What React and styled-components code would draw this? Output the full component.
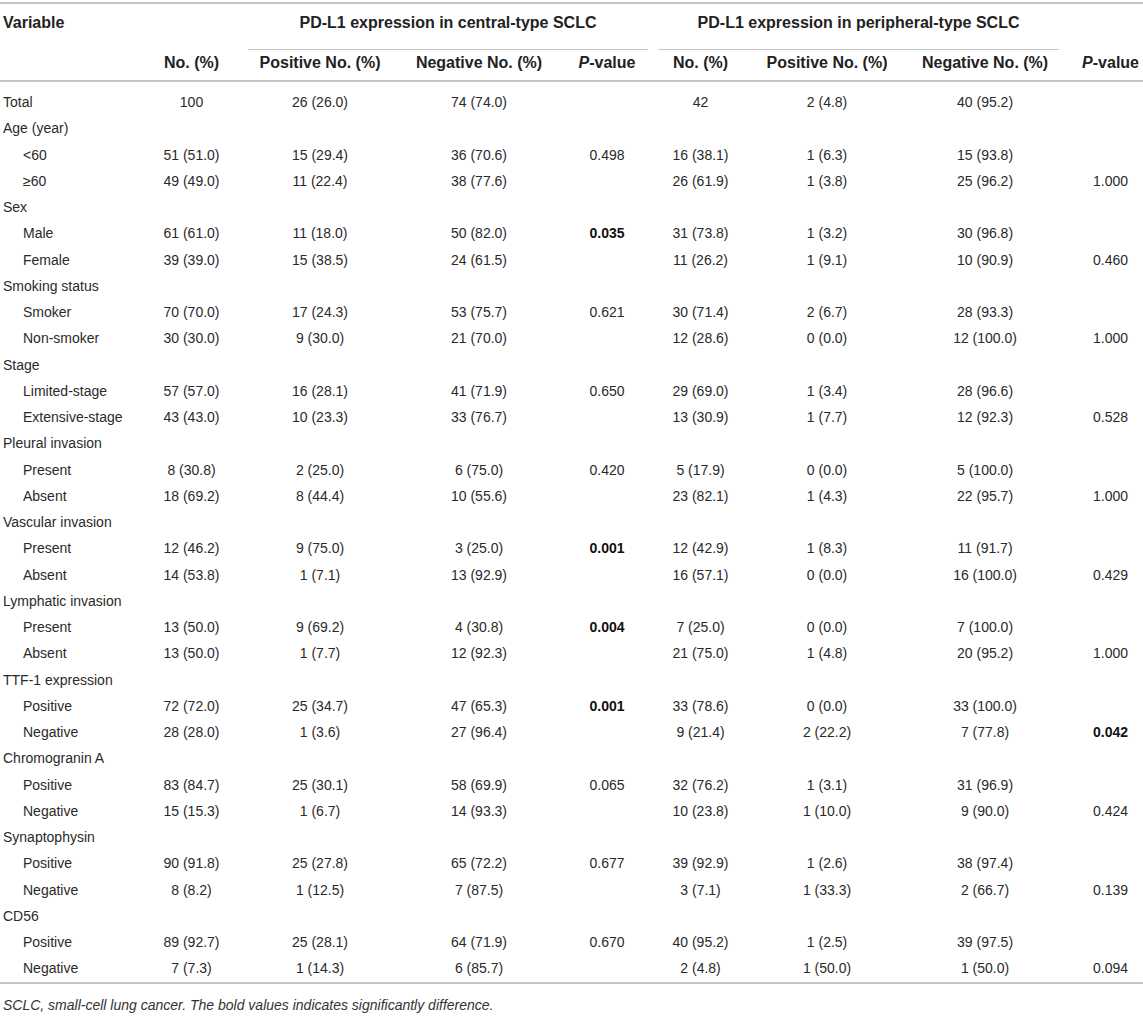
import React from "react";
import styled, { createGlobalStyle } from "styled-components";

const GlobalStyle = createGlobalStyle`
  html, body { margin: 0; padding: 0; background: #ffffff; }
  body { font-family: "Liberation Sans", Arial, Helvetica, sans-serif; color: #2a2a2a; }
`;

const Page = styled.div`
  width: 1143px;
  padding-top: 2px;
`;

const Table = styled.table`
  width: 1143px;
  table-layout: fixed;
  border-collapse: separate;
  border-spacing: 0;
`;

const HeadCell = styled.th`
  font-size: 16px;
  line-height: 18px;
  font-weight: 700;
  color: #222;
  text-align: ${(p) => (p.$left ? "left" : "center")};
  vertical-align: top;
  padding: ${(p) => (p.$top ? "10px 3px 0" : "4px 3px 8px")};
  ${(p) => p.$last && "padding-left: 14px; padding-right: 0;"}
  border-top: ${(p) => (p.$top ? "2px solid #c6c6c6" : "none")};
  border-bottom: ${(p) => (p.$top ? "none" : "2px solid #c6c6c6")};
  white-space: nowrap;
`;

const GroupCell = styled.th`
  font-size: 16px;
  line-height: 18px;
  font-weight: 700;
  color: #222;
  text-align: center;
  vertical-align: top;
  padding: 10px 5px 0;
  border-top: 2px solid #c6c6c6;
  white-space: nowrap;
`;

const GroupTitle = styled.div`
  padding-bottom: 17px;
  border-bottom: 1px solid #c6c6c6;
`;

const Cell = styled.td`
  font-size: 14px;
  line-height: 18.25px;
  padding: 4px 3px 4px ${(p) => (p.$indent ? "23px" : "3px")};
  ${(p) => p.$last && "padding-left: 14px; padding-right: 0;"}
  text-align: ${(p) => (p.$label ? "left" : "center")};
  font-weight: ${(p) => (p.$bold ? 700 : 400)};
  color: ${(p) => (p.$bold ? "#111" : "#2a2a2a")};
  white-space: nowrap;
  tbody tr:first-child & { padding-top: 11px; }
  tbody tr:last-child & { border-bottom: 2px solid #c6c6c6; }
`;

const Note = styled.p`
  margin: 13px 0 0 3px;
  font-size: 14px;
  line-height: 16px;
  font-style: italic;
  color: #333;
`;

const widths = [140, 103, 154, 164, 92, 95, 158, 158, 79];

const PValue = () => (
  <>
    <i>P</i>-value
  </>
);

const rows = [
  ["Total", false, ["100", "26 (26.0)", "74 (74.0)", "", "42", "2 (4.8)", "40 (95.2)", ""]],
  ["Age (year)", false, null],
  ["<60", true, ["51 (51.0)", "15 (29.4)", "36 (70.6)", "0.498", "16 (38.1)", "1 (6.3)", "15 (93.8)", ""]],
  ["≥60", true, ["49 (49.0)", "11 (22.4)", "38 (77.6)", "", "26 (61.9)", "1 (3.8)", "25 (96.2)", "1.000"]],
  ["Sex", false, null],
  ["Male", true, ["61 (61.0)", "11 (18.0)", "50 (82.0)", "*0.035", "31 (73.8)", "1 (3.2)", "30 (96.8)", ""]],
  ["Female", true, ["39 (39.0)", "15 (38.5)", "24 (61.5)", "", "11 (26.2)", "1 (9.1)", "10 (90.9)", "0.460"]],
  ["Smoking status", false, null],
  ["Smoker", true, ["70 (70.0)", "17 (24.3)", "53 (75.7)", "0.621", "30 (71.4)", "2 (6.7)", "28 (93.3)", ""]],
  ["Non-smoker", true, ["30 (30.0)", "9 (30.0)", "21 (70.0)", "", "12 (28.6)", "0 (0.0)", "12 (100.0)", "1.000"]],
  ["Stage", false, null],
  ["Limited-stage", true, ["57 (57.0)", "16 (28.1)", "41 (71.9)", "0.650", "29 (69.0)", "1 (3.4)", "28 (96.6)", ""]],
  ["Extensive-stage", true, ["43 (43.0)", "10 (23.3)", "33 (76.7)", "", "13 (30.9)", "1 (7.7)", "12 (92.3)", "0.528"]],
  ["Pleural invasion", false, null],
  ["Present", true, ["8 (30.8)", "2 (25.0)", "6 (75.0)", "0.420", "5 (17.9)", "0 (0.0)", "5 (100.0)", ""]],
  ["Absent", true, ["18 (69.2)", "8 (44.4)", "10 (55.6)", "", "23 (82.1)", "1 (4.3)", "22 (95.7)", "1.000"]],
  ["Vascular invasion", false, null],
  ["Present", true, ["12 (46.2)", "9 (75.0)", "3 (25.0)", "*0.001", "12 (42.9)", "1 (8.3)", "11 (91.7)", ""]],
  ["Absent", true, ["14 (53.8)", "1 (7.1)", "13 (92.9)", "", "16 (57.1)", "0 (0.0)", "16 (100.0)", "0.429"]],
  ["Lymphatic invasion", false, null],
  ["Present", true, ["13 (50.0)", "9 (69.2)", "4 (30.8)", "*0.004", "7 (25.0)", "0 (0.0)", "7 (100.0)", ""]],
  ["Absent", true, ["13 (50.0)", "1 (7.7)", "12 (92.3)", "", "21 (75.0)", "1 (4.8)", "20 (95.2)", "1.000"]],
  ["TTF-1 expression", false, null],
  ["Positive", true, ["72 (72.0)", "25 (34.7)", "47 (65.3)", "*0.001", "33 (78.6)", "0 (0.0)", "33 (100.0)", ""]],
  ["Negative", true, ["28 (28.0)", "1 (3.6)", "27 (96.4)", "", "9 (21.4)", "2 (22.2)", "7 (77.8)", "*0.042"]],
  ["Chromogranin A", false, null],
  ["Positive", true, ["83 (84.7)", "25 (30.1)", "58 (69.9)", "0.065", "32 (76.2)", "1 (3.1)", "31 (96.9)", ""]],
  ["Negative", true, ["15 (15.3)", "1 (6.7)", "14 (93.3)", "", "10 (23.8)", "1 (10.0)", "9 (90.0)", "0.424"]],
  ["Synaptophysin", false, null],
  ["Positive", true, ["90 (91.8)", "25 (27.8)", "65 (72.2)", "0.677", "39 (92.9)", "1 (2.6)", "38 (97.4)", ""]],
  ["Negative", true, ["8 (8.2)", "1 (12.5)", "7 (87.5)", "", "3 (7.1)", "1 (33.3)", "2 (66.7)", "0.139"]],
  ["CD56", false, null],
  ["Positive", true, ["89 (92.7)", "25 (28.1)", "64 (71.9)", "0.670", "40 (95.2)", "1 (2.5)", "39 (97.5)", ""]],
  ["Negative", true, ["7 (7.3)", "1 (14.3)", "6 (85.7)", "", "2 (4.8)", "1 (50.0)", "1 (50.0)", "0.094"]],
];

export default function App() {
  return (
    <Page>
      <GlobalStyle />
      <Table>
        <colgroup>
          {widths.map((w, i) => (
            <col key={i} style={{ width: w }} />
          ))}
        </colgroup>
        <thead>
          <tr>
            <HeadCell $top $left>Variable</HeadCell>
            <HeadCell $top />
            <GroupCell colSpan={3}>
              <GroupTitle>PD-L1 expression in central-type SCLC</GroupTitle>
            </GroupCell>
            <GroupCell colSpan={3}>
              <GroupTitle>PD-L1 expression in peripheral-type SCLC</GroupTitle>
            </GroupCell>
            <HeadCell $top />
          </tr>
          <tr>
            <HeadCell />
            <HeadCell>No. (%)</HeadCell>
            <HeadCell>Positive No. (%)</HeadCell>
            <HeadCell>Negative No. (%)</HeadCell>
            <HeadCell><PValue /></HeadCell>
            <HeadCell>No. (%)</HeadCell>
            <HeadCell>Positive No. (%)</HeadCell>
            <HeadCell>Negative No. (%)</HeadCell>
            <HeadCell $last><PValue /></HeadCell>
          </tr>
        </thead>
        <tbody>
          {rows.map(([label, indent, vals], r) => (
            <tr key={r}>
              <Cell $label $indent={indent}>{label}</Cell>
              {(vals || ["", "", "", "", "", "", "", ""]).map((v, i) => {
                const bold = v.startsWith("*");
                return (
                  <Cell key={i} $bold={bold} $last={i === 7}>
                    {bold ? v.slice(1) : v}
                  </Cell>
                );
              })}
            </tr>
          ))}
        </tbody>
      </Table>
      <Note>SCLC, small-cell lung cancer. The bold values indicates significantly difference.</Note>
    </Page>
  );
}
